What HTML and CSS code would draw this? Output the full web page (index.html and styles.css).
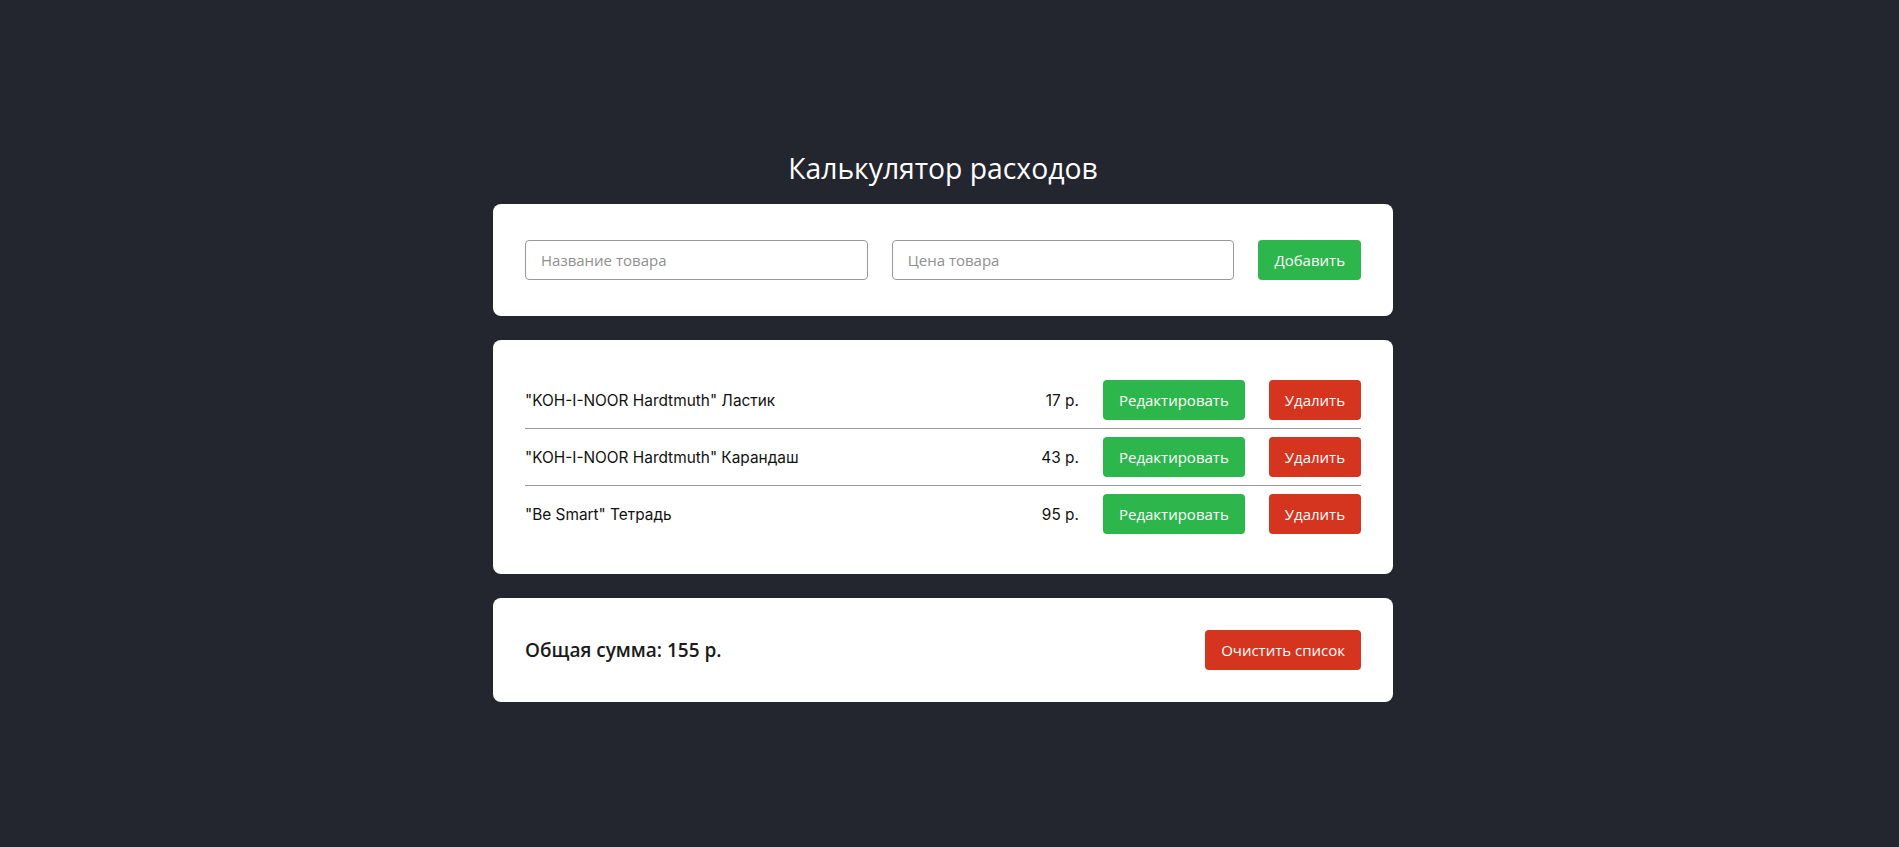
FILE: index.html
```html
<!DOCTYPE html>
<html lang="ru">
<head>
<meta charset="utf-8">
<title>Калькулятор расходов</title>
<link rel="stylesheet" href="styles.css">
</head>
<body>
<main class="app">
  <h1 class="title">Калькулятор расходов</h1>
  <form class="card card-form">
    <input class="field" type="text" placeholder="Название товара">
    <input class="field" type="text" placeholder="Цена товара">
    <button class="btn btn-green" type="button">Добавить</button>
  </form>
  <section class="card card-list">
    <div class="row">
      <span class="row-name">"KOH-I-NOOR Hardtmuth" Ластик</span>
      <span class="row-price">17 р.</span>
      <button class="btn btn-green" type="button">Редактировать</button>
      <button class="btn btn-red" type="button">Удалить</button>
    </div>
    <div class="row">
      <span class="row-name">"KOH-I-NOOR Hardtmuth" Карандаш</span>
      <span class="row-price">43 р.</span>
      <button class="btn btn-green" type="button">Редактировать</button>
      <button class="btn btn-red" type="button">Удалить</button>
    </div>
    <div class="row">
      <span class="row-name">"Be Smart" Тетрадь</span>
      <span class="row-price">95 р.</span>
      <button class="btn btn-green" type="button">Редактировать</button>
      <button class="btn btn-red" type="button">Удалить</button>
    </div>
  </section>
  <section class="card card-total">
    <span class="total">Общая сумма: 155 р.</span>
    <button class="btn btn-red" type="button">Очистить список</button>
  </section>
</main>
</body>
</html>
```
FILE: styles.css
```css
* { box-sizing: border-box; }
html, body { margin: 0; }
body {
  background: #23262e;
  min-height: 100vh;
  padding: 149px 13px 0 0;
  font-family: "Open Sans", "Noto Sans", sans-serif;
}
.app {
  width: 900px;
  margin: 0 auto;
  display: flex;
  flex-direction: column;
  gap: 24px;
}
.title {
  margin: 0 0 -7px;
  font-size: 28.3px;
  font-weight: 500;
  line-height: 38px;
  color: #ffffff;
  text-align: center;
}
.card {
  background: #ffffff;
  border-radius: 8px;
  margin: 0;
}
.card-form {
  display: flex;
  align-items: center;
  gap: 24px;
  padding: 36px 32px;
}
.field {
  flex: 1;
  min-width: 0;
  height: 40px;
  border: 1px solid #999999;
  border-radius: 4px;
  padding: 0 15px;
  font-family: "Open Sans", sans-serif;
  font-size: 15px;
  font-weight: 500;
  color: #222;
  outline: none;
}
.field::placeholder { color: #8f8f8f; }
.btn {
  height: 40px;
  padding: 0 16px;
  border: none;
  border-radius: 4px;
  font-family: "Open Sans", sans-serif;
  font-size: 15px;
  font-weight: 500;
  color: #ffffff;
  cursor: pointer;
  white-space: nowrap;
}
.btn-green { background: #2db64c; }
.btn-red { background: #d5351e; }
.card-list {
  padding: 32px;
  display: flex;
  flex-direction: column;
}
.row {
  display: flex;
  align-items: center;
  gap: 24px;
  height: 57px;
  border-bottom: 1px solid #9a9a9a;
  font-family: Inter, Roboto, sans-serif;
  font-size: 15.4px;
  color: #111111;
}
.row:last-child { border-bottom: none; height: 56px; }
.row-name { flex: 1; }
.card-total {
  padding: 32px;
  display: flex;
  align-items: center;
  justify-content: space-between;
}
.total {
  font-size: 19px;
  font-weight: 600;
  line-height: 26px;
  color: #1a1a1a;
}
```
